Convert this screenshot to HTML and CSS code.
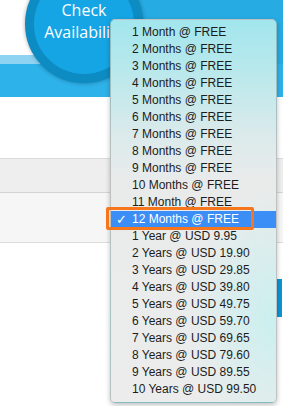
FILE: index.html
```html
<!DOCTYPE html>
<html>
<head>
<meta charset="utf-8">
<link rel="stylesheet" href="styles.css">
</head>
<body>
<div class="page">
  <div class="header">
    <div class="header-left"></div>
    <div class="header-right"></div>
  </div>
  <div class="stripe"><div class="stripe-left"></div><div class="stripe-right"></div></div>
  <div class="band"></div>
  <div class="spacer"></div>
  <div class="row-head"></div>
  <div class="row-body"></div>
  <div class="btn-row"><div class="edge-btn"></div></div>

  <div class="circle">
    <span>Check</span>
    <span>Availability</span>
  </div>

  <ul class="menu">
    <li>1 Month @ FREE</li>
    <li>2 Months @ FREE</li>
    <li>3 Months @ FREE</li>
    <li>4 Months @ FREE</li>
    <li>5 Months @ FREE</li>
    <li>6 Months @ FREE</li>
    <li>7 Months @ FREE</li>
    <li>8 Months @ FREE</li>
    <li>9 Months @ FREE</li>
    <li>10 Months @ FREE</li>
    <li>11 Month @ FREE</li>
    <li class="selected"><span class="check">✓</span>12 Months @ FREE</li>
    <li>1 Year @ USD 9.95</li>
    <li>2 Years @ USD 19.90</li>
    <li>3 Years @ USD 29.85</li>
    <li>4 Years @ USD 39.80</li>
    <li>5 Years @ USD 49.75</li>
    <li>6 Years @ USD 59.70</li>
    <li>7 Years @ USD 69.65</li>
    <li>8 Years @ USD 79.60</li>
    <li>9 Years @ USD 89.55</li>
    <li>10 Years @ USD 99.50</li>
  </ul>
  <div class="focus-ring"></div>
</div>
</body>
</html>
```

FILE: styles.css
```css
html, body {
  margin: 0;
  padding: 0;
  background: #ffffff;
}
.page {
  position: relative;
  width: 283px;
  height: 406px;
  overflow: hidden;
  font-family: "Liberation Sans", Arial, sans-serif;
}
.header {
  display: flex;
  height: 55px;
}
.header-left {
  width: 84px;
  background: #ffffff;
}
.header-right {
  flex: 1;
  background: #27abe3;
}
.stripe {
  display: flex;
  height: 9px;
}
.stripe-left {
  width: 84px;
  background: #8fd3f3;
}
.stripe-right {
  flex: 1;
  background: #27abe3;
}
.band {
  height: 33px;
  background: #2db2ea;
}
.spacer {
  height: 61px;
}
.row-head {
  height: 33px;
  background: #eeeeee;
  border-top: 1px solid #dadada;
  border-bottom: 1px solid #d4d4d4;
}
.row-body {
  height: 49px;
  background: #f6f6f6;
  border-bottom: 1px solid #dcdcdc;
}
.btn-row {
  display: flex;
  justify-content: flex-end;
  padding-top: 36px;
  padding-right: 1px;
}
.edge-btn {
  width: 6px;
  height: 38px;
  background: #0a95d7;
}
.circle {
  position: absolute;
  left: 25px;
  top: -35px;
  width: 100px;
  border: 9px solid #0d8bc3;
  border-radius: 50%;
  background: #15a5e5;
  box-shadow: 0 0 4px rgba(0, 0, 0, 0.35);
  display: flex;
  flex-direction: column;
  align-items: center;
  padding-top: 25px;
  box-sizing: content-box;
  height: 75px;
  font-family: "Open Sans", sans-serif;
  font-size: 16px;
  line-height: 22px;
  color: #ffffff;
  white-space: nowrap;
}
.menu {
  position: absolute;
  left: 110px;
  top: 19px;
  width: 165px;
  margin: 0;
  padding: 4px 0;
  list-style: none;
  border: 1px solid rgba(0, 0, 0, 0.18);
  border-radius: 5px;
  box-shadow: 0 2px 5px rgba(0, 0, 0, 0.25);
  background:
    radial-gradient(ellipse 90px 130px at 100% 78%, rgba(196, 240, 240, 0.85), rgba(196, 240, 240, 0) 100%),
    linear-gradient(to bottom, #a2e6ed 0%, #b6e8ec 12%, #dbeaeb 30%, #e9ebeb 42%, #ececec 100%);
  font-size: 12px;
  color: #1c1c1c;
}
.menu li {
  position: relative;
  height: 17px;
  line-height: 17px;
  padding-left: 21px;
  white-space: nowrap;
}
.menu li.selected {
  background: #3b8ef6;
  color: #ffffff;
}
.check {
  position: absolute;
  left: 5px;
  top: 0;
  font-family: "DejaVu Sans", sans-serif;
  font-size: 13px;
}
.focus-ring {
  position: absolute;
  left: 106px;
  top: 207px;
  width: 142px;
  height: 17px;
  border: 3px solid #f5761d;
  border-radius: 2px;
}
```
